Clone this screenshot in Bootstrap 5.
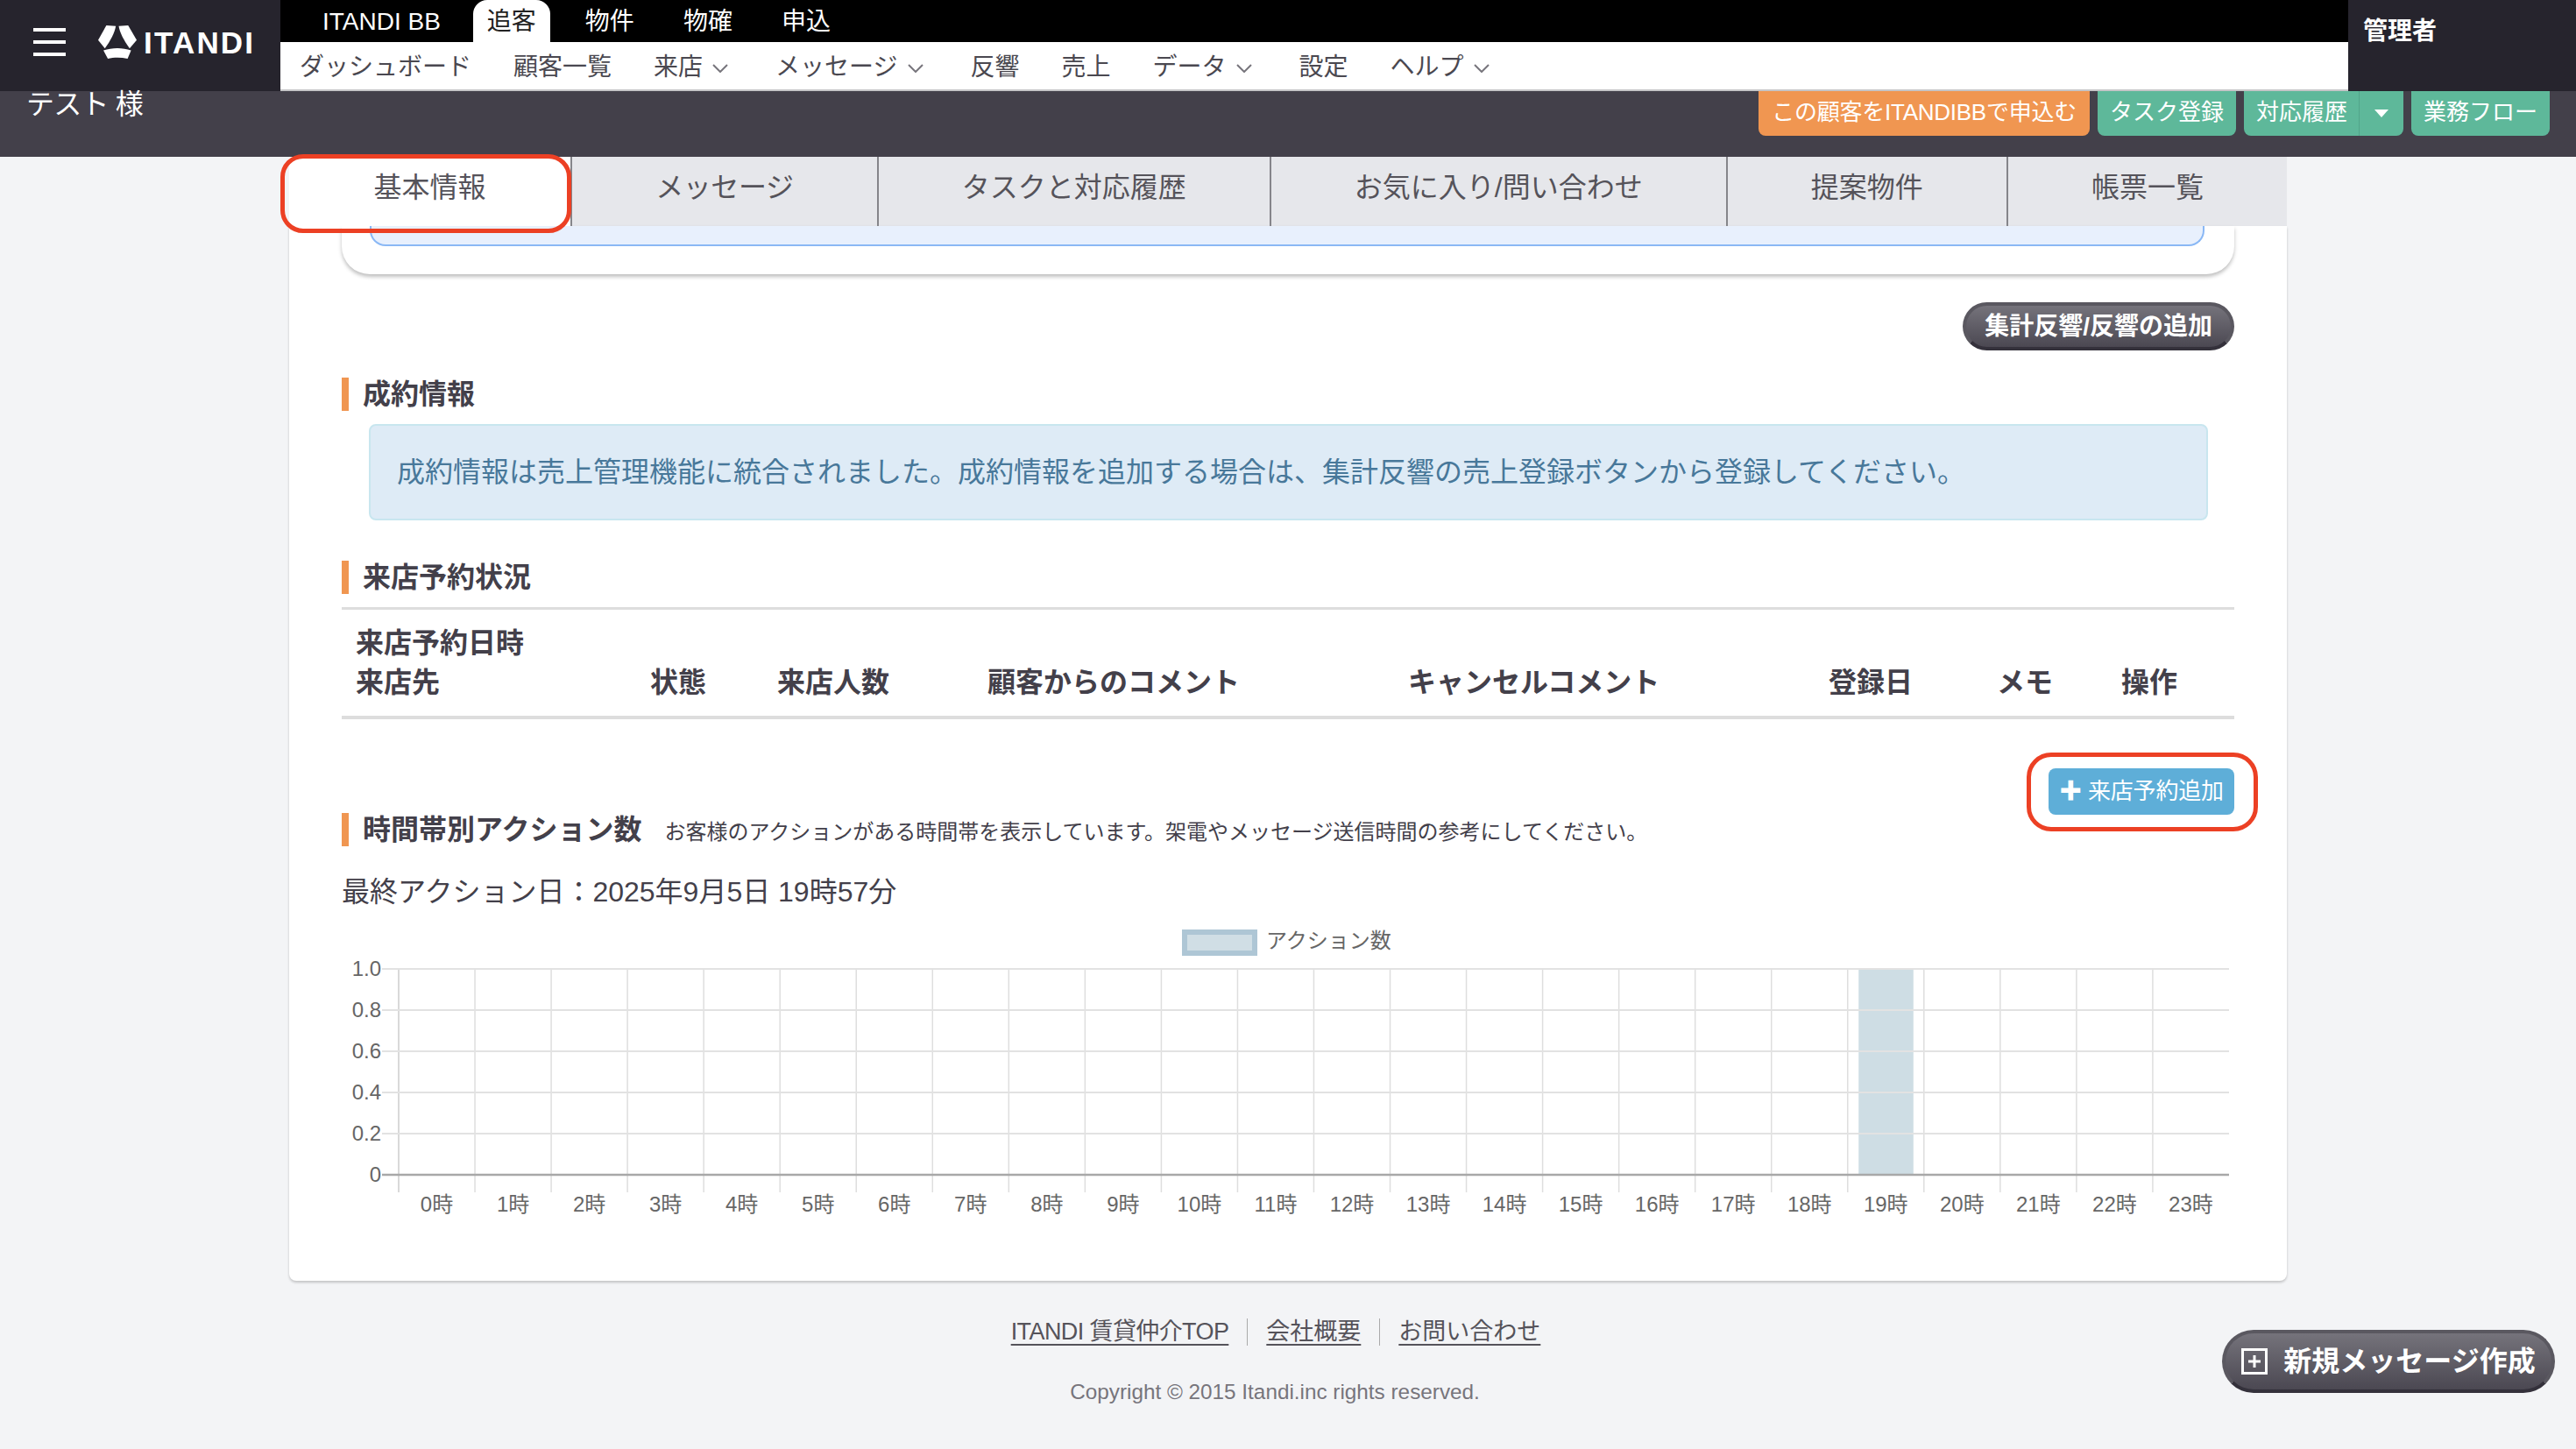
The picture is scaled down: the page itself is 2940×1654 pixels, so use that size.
<!DOCTYPE html>
<html lang="ja">
<head>
<meta charset="UTF-8">
<meta name="viewport" content="width=device-width, initial-scale=1.0">
<title>顧客詳細 | ITANDI</title>
<link rel="stylesheet" href="https://cdn.jsdelivr.net/npm/bootstrap@5.3.0/dist/css/bootstrap.min.css">
<style>
html, body { height: 1654px; overflow: hidden; }
body {
    position: relative;
    background: #f3f4f6;
    color: #43404a;
    font-family: "Liberation Sans", "Noto Sans CJK JP", sans-serif;
    font-size: 28px;
    line-height: 1.4;
}
a { color: inherit; text-decoration: none; }

/* header */
.top-head { height: 104px; }
.brand-box { width: 320px; background: #26242d; padding: 0 0 8px 38px; }
.burger { width: 37px; height: 32px; border-top: 4px solid #fff; border-bottom: 4px solid #fff; position: relative; margin-right: 37px; }
.burger::after { content: ""; position: absolute; left: 0; right: 0; top: 10px; height: 4px; background: #fff; }
.brand-name { font-size: 35px; font-weight: 700; color: #fff; letter-spacing: 2.2px; margin-left: 8px; line-height: 1; }
.admin-box { width: 260px; background: #26242d; color: #fff; font-weight: 700; padding: 16px 0 0 17px; }
.main-nav { height: 48px; background: #000; padding-left: 48px; }
.main-nav a { color: #fff; line-height: 50px; }
.top-link { margin-right: 56px; }
.brand-tab {
    background: #fff; color: #222 !important; height: 48px; padding: 0 16px;
    border-radius: 16px 16px 0 0; margin: 0 40px 0 37px; position: relative;
}
.sub-nav { height: 56px; background: #fff; border-bottom: 2px solid #c6c6c8; padding-left: 22px; gap: 48px; }
.sub-nav a { color: #4a4850; line-height: 57px; }
.chev { width: 18px; height: 10px; margin: 0 6px 0 11px; vertical-align: 3px; }
.head-band { height: 75px; background: #43404a; padding: 0 30px; }
.cust-name { color: #fff; font-size: 32px; line-height: 30px; letter-spacing: -.8px; }
.band-btns { gap: 9px; }
.flat-btn {
    height: 51px; line-height: 49px; padding: 0 14px; color: #fff; font-size: 26px;
    border-radius: 0 0 8px 8px; white-space: nowrap;
}
.flat-orange { background: #f09651; padding: 0 15px; letter-spacing: -.25px; }
.flat-green { background: #5eb89a; }
.flat-caret { border-left: 1px solid #52a489; padding: 0 17px; display: flex; align-items: center; margin-right: -14px; margin-left: 13px; height: 51px; }
.flat-caret i { border: 8px solid transparent; border-top: 9px solid #fff; border-bottom: 0; display: block; }

/* tabs + card */
.page-wrap { width: 2280px; margin-left: 330px; }
.cust-tabs { height: 79px; background: #e6e7eb; }
.cust-tab { flex: 1 1 auto; text-align: center; padding: 0 95px; font-size: 32px; line-height: 70px; color: #55535a; border-left: 2px solid #85858a; white-space: nowrap; }
.cust-tab.on { background: #fff; border-left: 0; padding: 0 96.5px; }
.cust-tab:nth-child(2) { letter-spacing: -.4px; }
.sheet { height: 1204px; background: #fff; box-shadow: 0 2px 3px rgba(0,0,0,.2); border-radius: 0 0 8px 8px; padding: 0 60px; }
.prev-box { height: 55px; border-radius: 0 0 32px 32px; margin: 0; padding: 0 34px 32px 32px; box-shadow: 0 3px 4px rgba(0,0,0,.25); }
.prev-inner { height: 23px; background: #e8f0fd; border: 2px solid #8ab8f5; border-top: 0; border-radius: 0 0 18px 18px; }
.pill-btn {
    display: inline-block; color: #fff; font-weight: 700; white-space: nowrap;
    background: linear-gradient(#75737b, #4b4852); border: 4px solid #5a5860; border-bottom-color: #34313b; border-radius: 40px;
}
.pill-small { font-size: 28px; height: 55px; line-height: 47px; padding: 0 21px; margin-top: 32px; }
.sec-head { border-left: 8px solid #f09651; padding-left: 16px; height: 38px; line-height: 38px; font-size: 32px; font-weight: 700; color: #43404a; }
.sec-deal { margin-top: 31px; }
.sec-action { margin-top: 68px; }
.info-box {
    height: 110px; line-height: 106px; margin: 15px 30px 46px 31px; padding-left: 30px;
    background: #deebf6; border: 2px solid #c8e6ef; border-radius: 8px; color: #48789a; font-size: 32px;
}
.rsv-table { margin: 15px 0 0; width: 100%; border-top: 3px solid #ddd; border-bottom: 4px solid #ddd; height: 128px; table-layout: fixed; border-collapse: separate; border-spacing: 0; }
.rsv-table th { font-size: 32px; font-weight: 700; line-height: 45px; vertical-align: bottom; padding: 0 0 15px 16px; color: #43404a; }
.rsv-table th:nth-child(1) { width: 336px; }
.rsv-table th:nth-child(2) { width: 145px; }
.rsv-table th:nth-child(3) { width: 240px; }
.rsv-table th:nth-child(4), .rsv-table th:nth-child(5) { width: 480px; }
.rsv-table th:nth-child(6) { width: 192px; }
.rsv-table th:nth-child(7) { width: 142px; }
.add-row { height: 39px; }
.rsv-add { background: #5eaed8; color: #fff; border-radius: 8px; font-size: 26px; height: 53px; width: 212px; line-height: 53px; text-align: center; margin-top: 56px; white-space: nowrap; letter-spacing: -.2px; }
.act-note { font-size: 24px; font-weight: 400; margin-left: 26px; }
.last-act { font-size: 32px; margin-top: 30px; line-height: 45px; }

/* chart */
.chart-box { height: 340px; margin-top: 21px; color: #666; font-size: 24px; }
.legend-row { height: 28px; line-height: 28px; padding-left: 959px; gap: 10px; }
.legend-key { width: 86px; height: 30px; background: #d0dee5; border: 6px solid #aec6d5; }
.legend-text { margin-bottom: 4px; }
.plot { position: relative; height: 255px; margin: 16px 0 0 0; }
.plot svg { display: block; overflow: visible; }

/* footer */
.foot-links { margin-top: 43px; height: 44px; font-size: 27px; justify-content: center; align-items: flex-start; padding-right: 28px; }
.foot-links a { text-decoration: underline; text-underline-offset: 5px; padding: 0 21px; color: #55535a; height: 31px; line-height: 31px; }
.foot-links a + a { border-left: 1px solid #aaa; }
.foot-links a:first-child { letter-spacing: -.6px; }
.copy-line { text-align: center; color: #77757c; font-size: 24.3px; margin-top: 23px; padding-right: 30px; }

/* over content */
.new-msg { position: absolute; left: 2536px; top: 1518px; width: 380px; height: 72px; font-size: 32px; line-height: 60px; text-align: center; gap: 18px; }
.mark-box { position: absolute; border: 5px solid #ec4024; pointer-events: none; }
.mark-tab { left: 320px; top: 176px; width: 332px; height: 90px; border-radius: 26px; }
.mark-add { left: 2313px; top: 859px; width: 264px; height: 90px; border-radius: 28px; }
</style>
</head>
<body>

<header class="top-head d-flex">
    <div class="brand-box d-flex align-items-center">
        <div class="burger"></div>
        <svg width="44" height="38" viewBox="12 10 131 113" fill="#fff">
            <path d="M40 10 L72 12 C68 35 55 60 35 88 L12 60 Z"/>
            <path d="M114 10 L82 12 C86 35 99 60 119 88 L143 60 Z"/>
            <path d="M30 95 C60 85 95 85 124 95 L112 123 C90 118 65 118 45 123 Z"/>
        </svg>
        <span class="brand-name">ITANDI</span>
    </div>
    <div class="flex-grow-1">
        <nav class="main-nav d-flex">
            <a href="#" class="top-link m-0">ITANDI BB</a>
            <a href="#" class="brand-tab">追客</a>
            <a href="#" class="top-link">物件</a>
            <a href="#" class="top-link">物確</a>
            <a href="#" class="top-link">申込</a>
        </nav>
        <nav class="sub-nav d-flex">
            <a href="#">ダッシュボード</a>
            <a href="#">顧客一覧</a>
            <a href="#">来店<svg class="chev" viewBox="0 0 18 10"><path d="M1 1 L9 9 L17 1" fill="none" stroke="#77757c" stroke-width="2"/></svg></a>
            <a href="#">メッセージ<svg class="chev" viewBox="0 0 18 10"><path d="M1 1 L9 9 L17 1" fill="none" stroke="#77757c" stroke-width="2"/></svg></a>
            <a href="#">反響</a>
            <a href="#">売上</a>
            <a href="#">データ<svg class="chev" viewBox="0 0 18 10"><path d="M1 1 L9 9 L17 1" fill="none" stroke="#77757c" stroke-width="2"/></svg></a>
            <a href="#">設定</a>
            <a href="#">ヘルプ<svg class="chev" viewBox="0 0 18 10"><path d="M1 1 L9 9 L17 1" fill="none" stroke="#77757c" stroke-width="2"/></svg></a>
        </nav>
    </div>
    <div class="admin-box">管理者</div>
</header>

<div class="head-band d-flex justify-content-between align-items-start">
    <div class="cust-name">テスト 様</div>
    <div class="band-btns d-flex">
        <a href="#" class="flat-btn flat-orange">この顧客をITANDIBBで申込む</a>
        <a href="#" class="flat-btn flat-green">タスク登録</a>
        <a href="#" class="flat-btn flat-green d-flex">対応履歴<span class="flat-caret"><i></i></span></a>
        <a href="#" class="flat-btn flat-green">業務フロー</a>
    </div>
</div>

<div class="page-wrap">
    <div class="cust-tabs d-flex">
        <a href="#" class="cust-tab on">基本情報</a>
        <a href="#" class="cust-tab">メッセージ</a>
        <a href="#" class="cust-tab">タスクと対応履歴</a>
        <a href="#" class="cust-tab">お気に入り/問い合わせ</a>
        <a href="#" class="cust-tab">提案物件</a>
        <a href="#" class="cust-tab">帳票一覧</a>
    </div>

    <div class="sheet">
        <div class="prev-box"><div class="prev-inner"></div></div>
        <div class="text-end"><a href="#" class="pill-btn pill-small">集計反響/反響の追加</a></div>

        <div class="sec-head sec-deal">成約情報</div>
        <div class="info-box">成約情報は売上管理機能に統合されました。成約情報を追加する場合は、集計反響の売上登録ボタンから登録してください。</div>

        <div class="sec-head">来店予約状況</div>
        <table class="rsv-table">
            <thead>
                <tr>
                    <th>来店予約日時<br>来店先</th>
                    <th>状態</th>
                    <th>来店人数</th>
                    <th>顧客からのコメント</th>
                    <th>キャンセルコメント</th>
                    <th>登録日</th>
                    <th>メモ</th>
                    <th>操作</th>
                </tr>
            </thead>
        </table>

        <div class="d-flex justify-content-end add-row">
            <a href="#" class="rsv-add">✚ 来店予約追加</a>
        </div>

        <div class="sec-head sec-action">時間帯別アクション数<span class="act-note">お客様のアクションがある時間帯を表示しています。架電やメッセージ送信時間の参考にしてください。</span></div>
        <div class="last-act">最終アクション日：2025年9月5日 19時57分</div>

        <div class="chart-box">
            <div class="legend-row d-flex align-items-center">
                <span class="legend-key"></span><span class="legend-text">アクション数</span>
            </div>
            <div class="plot" id="plot"></div>
        </div>
    </div>

    <div class="foot-links d-flex">
        <a href="#">ITANDI 賃貸仲介TOP</a><a href="#">会社概要</a><a href="#">お問い合わせ</a>
    </div>
    <div class="copy-line">Copyright © 2015 Itandi.inc rights reserved.</div>
</div>

<a href="#" class="pill-btn new-msg d-flex align-items-center justify-content-center">
    <svg width="30" height="30" viewBox="0 0 30 30" fill="none" stroke="#fff" stroke-width="3"><rect x="1.5" y="1.5" width="27" height="27"/><path d="M8 15 H22 M15 8 V22"/></svg>
    <span>新規メッセージ作成</span>
</a>

<div class="mark-box mark-tab"></div>
<div class="mark-box mark-add"></div>

<script>
    // chart drawn from the hourly counts, only 19時 has a value
    const counts = Array(24).fill(0);
    counts[19] = 1;

    const ns = "http://www.w3.org/2000/svg";
    const left = 65, top0 = 0, step = 87.04, rowH = 47, rows = 5;
    const svg = document.createElementNS(ns, "svg");
    svg.setAttribute("width", 2160);
    svg.setAttribute("height", 280);

    function line(x1, y1, x2, y2, color, w) {
        const l = document.createElementNS(ns, "line");
        l.setAttribute("x1", x1); l.setAttribute("y1", y1);
        l.setAttribute("x2", x2); l.setAttribute("y2", y2);
        l.setAttribute("stroke", color); l.setAttribute("stroke-width", w);
        svg.appendChild(l);
    }
    function label(x, y, str, anchor) {
        const t = document.createElementNS(ns, "text");
        t.setAttribute("x", x); t.setAttribute("y", y);
        t.setAttribute("text-anchor", anchor);
        t.setAttribute("fill", "#666");
        t.setAttribute("font-size", 24);
        t.textContent = str;
        svg.appendChild(t);
    }

    counts.forEach((c, i) => {
        if (c > 0) {
            const bar = document.createElementNS(ns, "rect");
            bar.setAttribute("x", left + step * i + 12.5);
            bar.setAttribute("y", top0);
            bar.setAttribute("width", 62.5);
            bar.setAttribute("height", rowH * rows);
            bar.setAttribute("fill", "#cedde4");
            svg.appendChild(bar);
        }
    });
    for (let i = 0; i < 24; i++) {
        const x = left + step * i;
        line(x, top0, x, top0 + rowH * rows + 20, i === 0 ? "#ccc" : "#dedede", 1.5);
        label(x + step / 2, top0 + rowH * rows + 42, i + "時", "middle");
    }
    ["1.0", "0.8", "0.6", "0.4", "0.2", "0"].forEach((v, i) => {
        const y = top0 + rowH * i;
        line(46, y, 2154, y, i === 5 ? "#a8a8a8" : "#e2e2e2", i === 5 ? 2.5 : 2);
        label(45, y + 8, v, "end");
    });
    document.getElementById("plot").appendChild(svg);
</script>
<script src="https://cdn.jsdelivr.net/npm/bootstrap@5.3.0/dist/js/bootstrap.bundle.min.js"></script>
</body>
</html>
